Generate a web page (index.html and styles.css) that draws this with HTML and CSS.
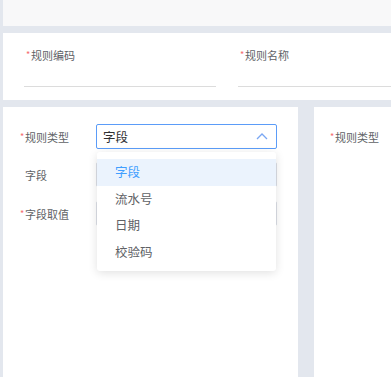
FILE: index.html
```html
<!DOCTYPE html>
<html lang="zh-CN">
<head>
  <meta charset="UTF-8" />
  <title>规则配置</title>
  <link rel="stylesheet" href="styles.css">
</head>
<body>

  <div class="top-bar"></div>

  <div class="base-info">
    <div class="line-field">
      <div class="line-label"><span class="req">*</span>规则编码</div>
      <div class="line-input"></div>
    </div>
    <div class="line-field wide">
      <div class="line-label"><span class="req">*</span>规则名称</div>
      <div class="line-input"></div>
    </div>
  </div>

  <div class="columns">
    <div class="col col-left">
      <div class="form-row">
        <div class="form-label"><span class="req">*</span>规则类型</div>
        <div class="select-wrap">
          <div class="select is-open">
            <span>字段</span>
            <svg class="arrow" width="12" height="7" viewBox="0 0 12 7">
              <path d="M1 6 L6 1 L11 6" fill="none" stroke="#7aa7f3" stroke-width="1.3"/>
            </svg>
          </div>
          <ul class="dropdown">
            <li class="active">字段</li>
            <li>流水号</li>
            <li>日期</li>
            <li>校验码</li>
          </ul>
        </div>
      </div>
      <div class="form-row">
        <div class="form-label plain">字段</div>
        <div class="input"></div>
      </div>
      <div class="form-row">
        <div class="form-label"><span class="req">*</span>字段取值</div>
        <div class="input"></div>
      </div>
    </div>

    <div class="col col-right">
      <div class="form-label"><span class="req">*</span>规则类型</div>
    </div>
  </div>

</body>
</html>
```

FILE: styles.css
```css
body {
  margin: 0;
  background-color: #e3e7ee;
  font-family: "Noto Sans CJK SC", "Noto Sans", sans-serif;
  color: #606266;
  overflow: hidden;
}

.top-bar {
  height: 26px;
  margin-left: 3px;
  background-color: #f8f8f9;
}

.base-info {
  margin: 7px 0 0 3px;
  height: 67px;
  background: #fff;
  display: flex;
  gap: 22px;
  padding-left: 21px;
  box-sizing: border-box;
  overflow: hidden;
}

.line-field {
  width: 192px;
  flex-shrink: 0;
}

.line-field.wide {
  flex: 1;
  min-width: 0;
}

.line-label {
  font-size: 11px;
  padding: 14px 0 0 2px;
  height: 39px;
  box-sizing: border-box;
  white-space: nowrap;
}

.line-input {
  border-bottom: 1px solid #dcdcdc;
  height: 14px;
}

.req {
  color: #f56c6c;
  font-size: 9px;
  display: inline-block;
  width: 5px;
  vertical-align: 2px;
}

.columns {
  margin: 7px 0 0 3px;
  display: flex;
  gap: 16px;
  height: 280px;
}

.col {
  background: #fff;
}

.col-left {
  width: 295px;
  flex-shrink: 0;
  padding: 17px 0 0 17px;
  box-sizing: border-box;
}

.col-right {
  flex: 1;
  min-width: 0;
  overflow: hidden;
  padding: 22px 0 0 16px;
}

.form-row {
  display: flex;
  align-items: center;
  height: 25px;
  margin-bottom: 13px;
}

.form-row:nth-child(2) {
  margin-bottom: 14px;
}

.form-label {
  font-size: 11px;
  width: 76px;
  flex-shrink: 0;
  white-space: nowrap;
}

.form-label.plain {
  padding-left: 5px;
  width: 71px;
}

.select-wrap {
  position: relative;
  width: 181px;
}

.select, .input {
  height: 25px;
  width: 181px;
  box-sizing: border-box;
  border: 1px solid #dcdfe6;
  border-radius: 2px;
}

.select {
  display: flex;
  align-items: center;
  justify-content: space-between;
  padding: 0 8px 0 6px;
  font-size: 12.5px;
  color: #303133;
}

.select.is-open {
  border-color: #5b9cf8;
}

.dropdown {
  position: absolute;
  top: 28px;
  left: 1px;
  width: 179px;
  margin: 0;
  padding: 7px 0 6px;
  list-style: none;
  background: #fff;
  border-radius: 3px;
  box-shadow: 0 2px 10px rgba(0, 0, 0, 0.12);
  z-index: 2;
}

.dropdown li {
  height: 26.5px;
  line-height: 26.5px;
  padding-left: 18px;
  font-size: 12.5px;
  color: #606266;
}

.dropdown li.active {
  background-color: #ebf3fd;
  color: #409eff;
}
```
